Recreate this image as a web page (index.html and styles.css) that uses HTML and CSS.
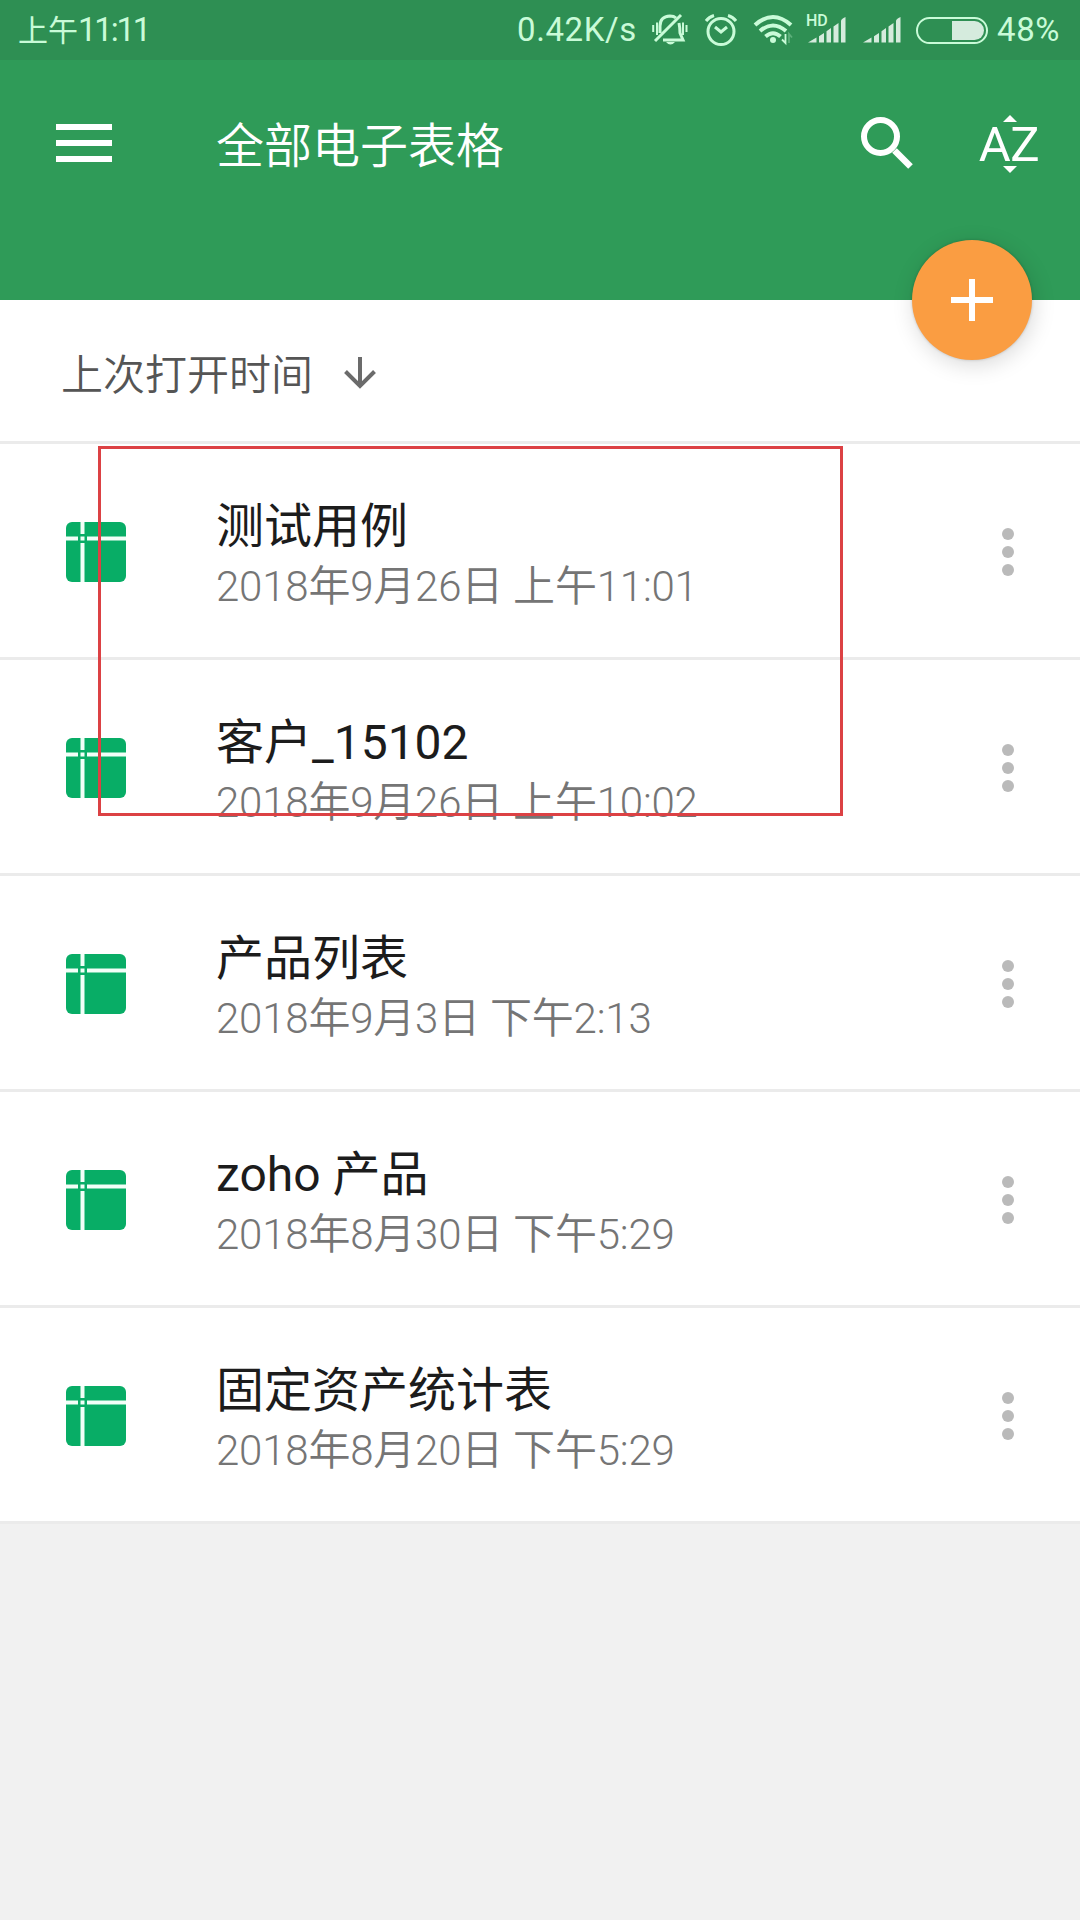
FILE: index.html
```
<!DOCTYPE html>
<html lang="zh-CN">
    <head>
        <meta charset="utf-8" />
        <title>全部电子表格</title>
        <link rel="stylesheet" href="styles.css">
    </head>
    <body>
        <svg width="0" height="0" class="defs">
            <symbol id="sheet" viewBox="0 0 60 60">
                <rect width="60" height="60" rx="6" fill="#08ad66" />
                <path d="M16.5 0V12M16.5 21V60M0 16.5H12M21 16.5H60" stroke="#f2fff8" stroke-width="4" />
                <rect x="14.5" y="14.5" width="4" height="4" fill="#f2fff8" />
            </symbol>
            <symbol id="dots" viewBox="0 0 12 48">
                <circle cx="6" cy="6" r="6" />
                <circle cx="6" cy="24" r="6" />
                <circle cx="6" cy="42" r="6" />
            </symbol>
            <symbol id="signal" viewBox="0 0 38 26">
                <path d="M0 25.500L8.500 20.500V25.500ZM11 25.500V19.200L16 16V25.500ZM18.500 25.500V14.200L23 11V25.500ZM25.500 25.500V9.500L30.500 6V25.500ZM33 25.500V4Q33 2 37.500 0V25.500Z" />
            </symbol>
        </svg>

        <div class="status_bar">
            <span class="clock">上午<span class="clock_num">11:11</span></span>
            <span class="speed">0.42K/s</span>
            <svg class="ic_mute" width="36" height="34" viewBox="0 0 36 34" fill="none" stroke="#c9fbd8" stroke-width="3">
                <path d="M8 20V13Q8 3.500 18 3Q22 3 24 5M27 10Q28 15 28 20L31 27H11" />
                <path d="M3 28L29 2" />
                <path d="M1.200 12V19M5 9.500V22M31 9.500V22M34.500 12V19" stroke-width="2" />
                <path d="M14 29H23Q18.500 34 14 29Z" fill="#c9fbd8" stroke="none" />
            </svg>
            <svg class="ic_alarm" width="34" height="34" viewBox="0 0 34 34" fill="none" stroke="#c9fbd8" stroke-width="3">
                <circle cx="17" cy="18.500" r="13" />
                <path d="M11 14L17 19L23 14M2 8Q5 4 10 2.500M24 2.500Q29 4 32 8" />
            </svg>
            <svg class="ic_wifi" width="40" height="32" viewBox="0 0 40 32" fill="none" stroke="#c9fbd8" stroke-width="4">
                <path d="M2 11Q20 -5 38 11M7 17Q20 6 33 17M12.500 22.500Q20 16 27.500 22.500" />
                <circle cx="20" cy="26" r="3" fill="#c9fbd8" stroke="none" />
                <path d="M32.500 20V29L29 25.500" stroke-width="1.800" />
                <path d="M36 29V20L39 23.500" stroke-width="1.800" opacity="0.3" />
            </svg>
            <span class="hd_signal">
                <span class="hd">HD</span>
                <svg width="38" height="26"><use href="#signal" /></svg>
            </span>
            <svg class="sim2" width="38" height="26"><use href="#signal" /></svg>
            <span class="battery"><span class="level"></span></span>
            <span class="percent">48%</span>
        </div>

        <div class="header">
            <svg class="menu" width="56" height="38" viewBox="0 0 56 38">
                <path d="M0 3H56M0 19H56M0 35H56" stroke="#fff" stroke-width="6" />
            </svg>
            <span class="title">全部电子表格</span>
            <svg class="search" width="54" height="54" viewBox="0 0 54 54" fill="none" stroke="#fff" stroke-width="6">
                <circle cx="20.500" cy="20.500" r="16.500" />
                <path d="M34.500 34.500L50.500 50.500" stroke-width="6.500" />
            </svg>
            <div class="sort_az">
                <svg width="14" height="7" viewBox="0 0 14 7"><path d="M0 7L7 0L14 7Z" fill="#fff" /></svg>
                <span>AZ</span>
                <svg width="14" height="7" viewBox="0 0 14 7"><path d="M0 0H14L7 7Z" fill="#fff" /></svg>
            </div>
            <div class="add_btn">
                <svg width="42" height="42" viewBox="0 0 42 42">
                    <path d="M21 0V42M0 21H42" stroke="#fff" stroke-width="6" />
                </svg>
            </div>
        </div>

        <div class="sort_row">
            <span>上次打开时间</span>
            <svg width="32" height="32" viewBox="0 0 32 32" fill="none" stroke="#6b6b6b" stroke-width="4">
                <path d="M16 0V29M1.500 14.500L16 29L30.500 14.500" />
            </svg>
        </div>

        <div class="list">
            <div class="row">
                <svg class="sheet" width="60" height="60"><use href="#sheet" /></svg>
                <div class="info">
                    <div class="name">测试用例</div>
                    <div class="date">2018年9月26日 上午11:01</div>
                </div>
                <svg class="more" width="12" height="48"><use href="#dots" /></svg>
            </div>
            <div class="row">
                <svg class="sheet" width="60" height="60"><use href="#sheet" /></svg>
                <div class="info">
                    <div class="name">客户<span class="latin">_15102</span></div>
                    <div class="date">2018年9月26日 上午10:02</div>
                </div>
                <svg class="more" width="12" height="48"><use href="#dots" /></svg>
            </div>
            <div class="row">
                <svg class="sheet" width="60" height="60"><use href="#sheet" /></svg>
                <div class="info">
                    <div class="name">产品列表</div>
                    <div class="date">2018年9月3日 下午2:13</div>
                </div>
                <svg class="more" width="12" height="48"><use href="#dots" /></svg>
            </div>
            <div class="row">
                <svg class="sheet" width="60" height="60"><use href="#sheet" /></svg>
                <div class="info">
                    <div class="name"><span class="latin">zoho</span> 产品</div>
                    <div class="date">2018年8月30日 下午5:29</div>
                </div>
                <svg class="more" width="12" height="48"><use href="#dots" /></svg>
            </div>
            <div class="row">
                <svg class="sheet" width="60" height="60"><use href="#sheet" /></svg>
                <div class="info">
                    <div class="name">固定资产统计表</div>
                    <div class="date">2018年8月20日 下午5:29</div>
                </div>
                <svg class="more" width="12" height="48"><use href="#dots" /></svg>
            </div>
            <div class="mark"></div>
        </div>
    </body>
</html>
```

FILE: styles.css
```
html, body {
    width: 100%;
    height: 100%;
}

body {
    margin: 0px;
    background-color: #f1f1f1;
    font-family: Roboto, "Noto Sans CJK SC", sans-serif;
    overflow: hidden;
}

svg {
    display: block;
    flex-shrink: 0;
}

.defs {
    position: absolute;
}

.status_bar {
    display: flex;
    align-items: center;
    height: 60px;
    padding: 0px 17px 0px 18px;
    box-sizing: border-box;
    background-color: #2e8f53;
    color: #c9fbd8;
    fill: #d5ebdd;
    font-size: 33px;
    font-weight: 380;
    line-height: 64px;
    white-space: nowrap;
}

.clock {
    width: 499px;
    font-size: 30px;
}

.clock_num {
    font-size: 33px;
    letter-spacing: -2.200px;
}

.speed {
    width: 135px;
    letter-spacing: 0.600px;
}

.ic_mute {
    margin: 0px 16px 0px 0px;
}

.ic_alarm {
    margin-right: 15px;
}

.ic_wifi {
    margin-right: 15px;
}

.hd_signal {
    position: relative;
    margin-right: 17px;
}

.hd {
    position: absolute;
    left: -2px;
    top: -4px;
    font-size: 16px;
    font-weight: 500;
    line-height: 15px;
}

.battery {
    display: flex;
    flex-shrink: 0;
    justify-content: flex-end;
    width: 72px;
    height: 27px;
    margin: 0px 9px 0px 15px;
    padding: 2px;
    box-sizing: border-box;
    border: 2px solid #c9fbd8;
    border-radius: 14px;
}

.level {
    width: 32px;
    height: 19px;
    border-radius: 0px 10px 10px 0px;
    background-color: #d5ebdd;
}

.percent {
    letter-spacing: 0.600px;
}

.header {
    position: relative;
    display: flex;
    align-items: flex-start;
    height: 240px;
    padding: 0px 38px 0px 56px;
    box-sizing: border-box;
    background-color: #2f9b58;
    color: #fff;
}

.menu {
    margin-top: 64px;
}

.title {
    flex: 1;
    margin: 51px 0px 0px 104px;
    font-size: 48px;
    font-weight: 350;
    line-height: 72px;
}

.search {
    margin: 56px 64px 0px 0px;
}

.sort_az {
    display: flex;
    flex-direction: column;
    align-items: center;
    width: 64px;
    margin-top: 55px;
}

.sort_az span {
    height: 44px;
    font-size: 49px;
    line-height: 46px;
    font-weight: 450;
    letter-spacing: -0.500px;
    padding-right: 2px;
}

.add_btn {
    position: absolute;
    right: 48px;
    bottom: -60px;
    display: flex;
    align-items: center;
    justify-content: center;
    width: 120px;
    height: 120px;
    border-radius: 50%;
    background-color: #fa9d42;
    box-shadow: 2px 5px 22px rgba(0, 0, 0, 0.15), 0px 0px 3px rgba(0, 0, 0, 0.2);
}

.sort_row {
    display: flex;
    align-items: center;
    height: 144px;
    padding: 1px 0px 0px 61px;
    box-sizing: border-box;
    border-bottom: 3px solid #ebebeb;
    background-color: #fff;
    color: #555;
    font-size: 42px;
    font-weight: 350;
}

.sort_row svg {
    margin: 3px 0px 0px 31px;
}

.list {
    position: relative;
}

.row {
    display: flex;
    align-items: center;
    height: 216px;
    padding: 2px 66px 0px;
    box-sizing: border-box;
    border-bottom: 3px solid #ebebeb;
    background-color: #fff;
}

.info {
    flex: 1;
    margin-left: 90px;
    padding-top: 11px;
}

.name {
    color: #1c1c1c;
    font-size: 48px;
    line-height: 60px;
    font-weight: 400;
}

.latin {
    font-weight: 450;
}

.date {
    color: #757575;
    font-size: 42px;
    line-height: 60px;
    font-weight: 350;
    letter-spacing: -0.200px;
}

.more {
    fill: #bababa;
}

.mark {
    position: absolute;
    left: 98px;
    top: 2px;
    width: 745px;
    height: 370px;
    box-sizing: border-box;
    border: 3px solid #dc4144;
}
```
